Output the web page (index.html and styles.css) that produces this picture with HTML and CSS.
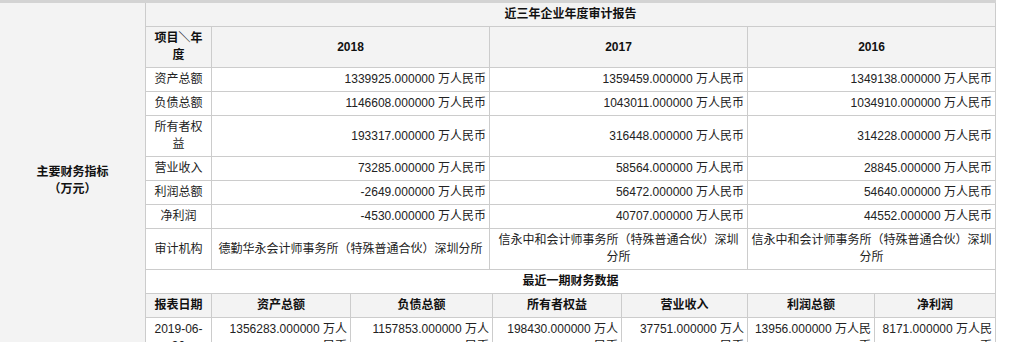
FILE: index.html
```html
<!DOCTYPE html>
<html lang="zh-CN">
<head>
<meta charset="utf-8">
<title>主要财务指标</title>
<link rel="stylesheet" href="styles.css">
</head>
<body>
<div class="report">
  <div class="side">
    <div class="side-title">主要财务指标<br>（万元）</div>
  </div>
  <div class="main">
    <div class="grid annual">
      <div class="cell head span-all">近三年企业年度审计报告</div>
      <div class="cell head">项目＼年度</div>
      <div class="cell head">2018</div>
      <div class="cell head">2017</div>
      <div class="cell head">2016</div>

      <div class="cell label">资产总额</div>
      <div class="cell num">1339925.000000 万人民币</div>
      <div class="cell num">1359459.000000 万人民币</div>
      <div class="cell num">1349138.000000 万人民币</div>

      <div class="cell label">负债总额</div>
      <div class="cell num">1146608.000000 万人民币</div>
      <div class="cell num">1043011.000000 万人民币</div>
      <div class="cell num">1034910.000000 万人民币</div>

      <div class="cell label">所有者权益</div>
      <div class="cell num">193317.000000 万人民币</div>
      <div class="cell num">316448.000000 万人民币</div>
      <div class="cell num">314228.000000 万人民币</div>

      <div class="cell label">营业收入</div>
      <div class="cell num">73285.000000 万人民币</div>
      <div class="cell num">58564.000000 万人民币</div>
      <div class="cell num">28845.000000 万人民币</div>

      <div class="cell label">利润总额</div>
      <div class="cell num">-2649.000000 万人民币</div>
      <div class="cell num">56472.000000 万人民币</div>
      <div class="cell num">54640.000000 万人民币</div>

      <div class="cell label">净利润</div>
      <div class="cell num">-4530.000000 万人民币</div>
      <div class="cell num">40707.000000 万人民币</div>
      <div class="cell num">44552.000000 万人民币</div>

      <div class="cell label">审计机构</div>
      <div class="cell label">德勤华永会计师事务所（特殊普通合伙）深圳分所</div>
      <div class="cell label">信永中和会计师事务所（特殊普通合伙）深圳分所</div>
      <div class="cell label">信永中和会计师事务所（特殊普通合伙）深圳分所</div>
    </div>

    <div class="grid recent">
      <div class="cell title span-all">最近一期财务数据</div>
      <div class="cell head">报表日期</div>
      <div class="cell head">资产总额</div>
      <div class="cell head">负债总额</div>
      <div class="cell head">所有者权益</div>
      <div class="cell head">营业收入</div>
      <div class="cell head">利润总额</div>
      <div class="cell head">净利润</div>

      <div class="cell label"><span>2019-06-<br>30</span></div>
      <div class="cell num"><span>1356283.000000 万人<br>民币</span></div>
      <div class="cell num"><span>1157853.000000 万人<br>民币</span></div>
      <div class="cell num"><span>198430.000000 万人<br>民币</span></div>
      <div class="cell num"><span>37751.000000 万人<br>民币</span></div>
      <div class="cell num"><span>13956.000000 万人民<br>币</span></div>
      <div class="cell num"><span>8171.000000 万人民<br>币</span></div>
    </div>
  </div>
</div>
</body>
</html>
```

FILE: styles.css
```css
html, body {
  margin: 0;
  padding: 0;
  background: #ffffff;
}

body {
  font-family: "Liberation Sans", "Noto Sans CJK SC", sans-serif;
  font-size: 12px;
  line-height: 17px;
  color: #222222;
}

.report {
  display: flex;
  width: 996px;
  border-top: 3px solid #d3d3d3;
  border-bottom: 1px solid #cccccc;
}

.side {
  width: 145px;
  flex: none;
  border-right: 1px solid #cccccc;
  background: #f3f3f3;
  display: flex;
  align-items: center;
  justify-content: center;
  text-align: center;
  font-weight: bold;
  color: #111111;
}

.main {
  width: 849px;
  flex: none;
  border-right: 1px solid #cccccc;
  display: flex;
  flex-direction: column;
  gap: 1px;
  background: #cccccc;
}

.grid {
  display: grid;
  gap: 1px;
  background: #cccccc;
}

.annual {
  grid-template-columns: 65px 277px 257px 247px;
}

.recent {
  grid-template-columns: 65px 138px 141px 128px 125px 126px 120px;
}

.cell {
  background: #ffffff;
  padding: 3px;
  min-height: 17px;
  display: flex;
  flex-direction: column;
  justify-content: center;
  text-align: center;
}

.span-all {
  grid-column: 1 / -1;
}

.head {
  background: #f3f3f3;
  font-weight: bold;
  color: #111111;
}

.title {
  font-weight: bold;
  color: #111111;
}

.label {
  text-align: center;
}

.num {
  text-align: right;
}
```
